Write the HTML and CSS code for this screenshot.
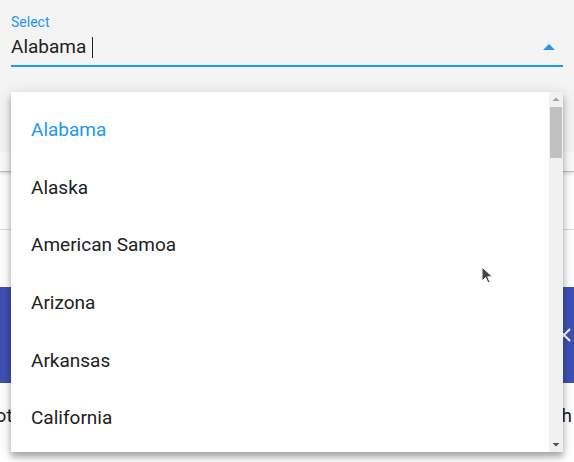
FILE: index.html
```html
<!DOCTYPE html>
<html>
<head>
<meta charset="utf-8">
<link rel="stylesheet" href="styles.css">
</head>
<body>
<div class="page">
  <header class="field-area">
    <div class="field">
      <label class="field-label">Select</label>
      <div class="field-row">
        <span class="field-value">Alabama</span><span class="caret"></span>
        <span class="spacer"></span>
        <svg class="arrow" width="12" height="6" viewBox="0 0 12 6"><path d="M0 6 L6 0 L12 6 Z" fill="#2196f3"/></svg>
      </div>
    </div>
  </header>
  <div class="tabs"></div>
  <div class="row bordered"></div>
  <div class="row"></div>
  <div class="toolbar">
    <span class="spacer"></span>
    <svg class="close" width="14" height="14" viewBox="0 0 14 14"><path d="M1 1 L13 13 M13 1 L1 13" stroke="#fff" stroke-width="2"/></svg>
  </div>
  <div class="text-row"><span class="t-left">Not</span><span class="spacer"></span><span class="t-right">Search</span></div>

  <div class="menu">
    <ul class="menu-list">
      <li class="menu-item selected">Alabama</li>
      <li class="menu-item">Alaska</li>
      <li class="menu-item">American Samoa</li>
      <li class="menu-item">Arizona</li>
      <li class="menu-item">Arkansas</li>
      <li class="menu-item">California</li>
      <li class="menu-item">Colorado</li>
    </ul>
    <div class="scrollbar">
      <svg class="sb-arrow" width="14" height="14" viewBox="0 0 14 14"><path d="M3.5 9 L7 5.5 L10.5 9 Z" fill="#a3a3a3"/></svg>
      <div class="sb-track"><div class="sb-thumb"></div></div>
      <svg class="sb-arrow" width="14" height="14" viewBox="0 0 14 14"><path d="M3.5 5 L7 8.5 L10.5 5 Z" fill="#505050"/></svg>
    </div>
  </div>

  <svg class="pointer" width="14" height="20" viewBox="0 0 14 20"><path d="M1 1 L1 15 L4.5 11.5 L7 17 L9 16 L6.7 10.8 L11.5 10.8 Z" fill="#474747" stroke="#fff" stroke-width="1"/></svg>
</div>
</body>
</html>
```
FILE: styles.css
```css
* { box-sizing: border-box; }
html, body { margin: 0; padding: 0; }
body {
  font-family: Roboto, "Noto Sans", "Liberation Sans", sans-serif;
  background: #ffffff;
  width: 574px;
  height: 462px;
  overflow: hidden;
}
.page { position: relative; width: 574px; height: 462px; overflow: hidden; }
.field-area {
  height: 152px;
  background: #f4f4f4;
  padding: 13px 11px 0 11px;
}
.field { display: flex; flex-direction: column; }
.field-label {
  font-size: 14px;
  line-height: 18px;
  color: #2196f3;
}
.field-row {
  display: flex;
  align-items: center;
  height: 36px;
  border-bottom: 2px solid #2196f3;
  padding-bottom: 2px;
  padding-right: 8px;
}
.field-value {
  font-size: 19px;
  color: #222222;
  line-height: 22px;
}
.caret {
  display: inline-block;
  width: 1px;
  height: 21px;
  background: #222;
  margin-left: 6px;
}
.spacer { flex: 1; }
.arrow { display: block; }
.tabs {
  height: 20px;
  background: #fafafa;
  border-bottom: 1px solid #bdbdbd;
  box-shadow: 0 2px 3px rgba(0,0,0,0.12);
  position: relative;
}
.row { height: 57px; background: #fff; }
.row.bordered { border-bottom: 1px solid #dcdcdc; height: 58px; }
.toolbar {
  height: 96px;
  background: #3f51b5;
  display: flex;
  align-items: center;
}
.close { margin-right: 3px; }
.text-row {
  display: flex;
  align-items: center;
  height: 64px;
  font-size: 19px;
  color: #222;
}
.t-left { margin-left: -18px; }
.t-right { margin-right: 2px; }

.menu {
  position: absolute;
  left: 11px;
  top: 92px;
  width: 552px;
  height: 360px;
  background: #fff;
  display: flex;
  box-shadow: 0 5px 6px rgba(0,0,0,0.28), 0 2px 14px rgba(0,0,0,0.14);
  overflow: hidden;
}
.menu-list {
  list-style: none;
  margin: 0;
  padding: 9px 0 0 0;
  flex: 1;
  overflow: hidden;
}
.menu-item {
  height: 57.6px;
  display: flex;
  align-items: center;
  padding-left: 20px;
  font-size: 19px;
  color: #212121;
}
.menu-item.selected { color: #2196f3; }
.scrollbar {
  width: 14px;
  background: #f1f1f1;
  display: flex;
  flex-direction: column;
}
.sb-arrow { display: block; flex: none; }
.sb-track { flex: 1; padding: 1px 1px 0 1px; }
.sb-thumb { height: 51px; background: #c1c1c1; }
.pointer {
  position: absolute;
  left: 481px;
  top: 266px;
}
```
